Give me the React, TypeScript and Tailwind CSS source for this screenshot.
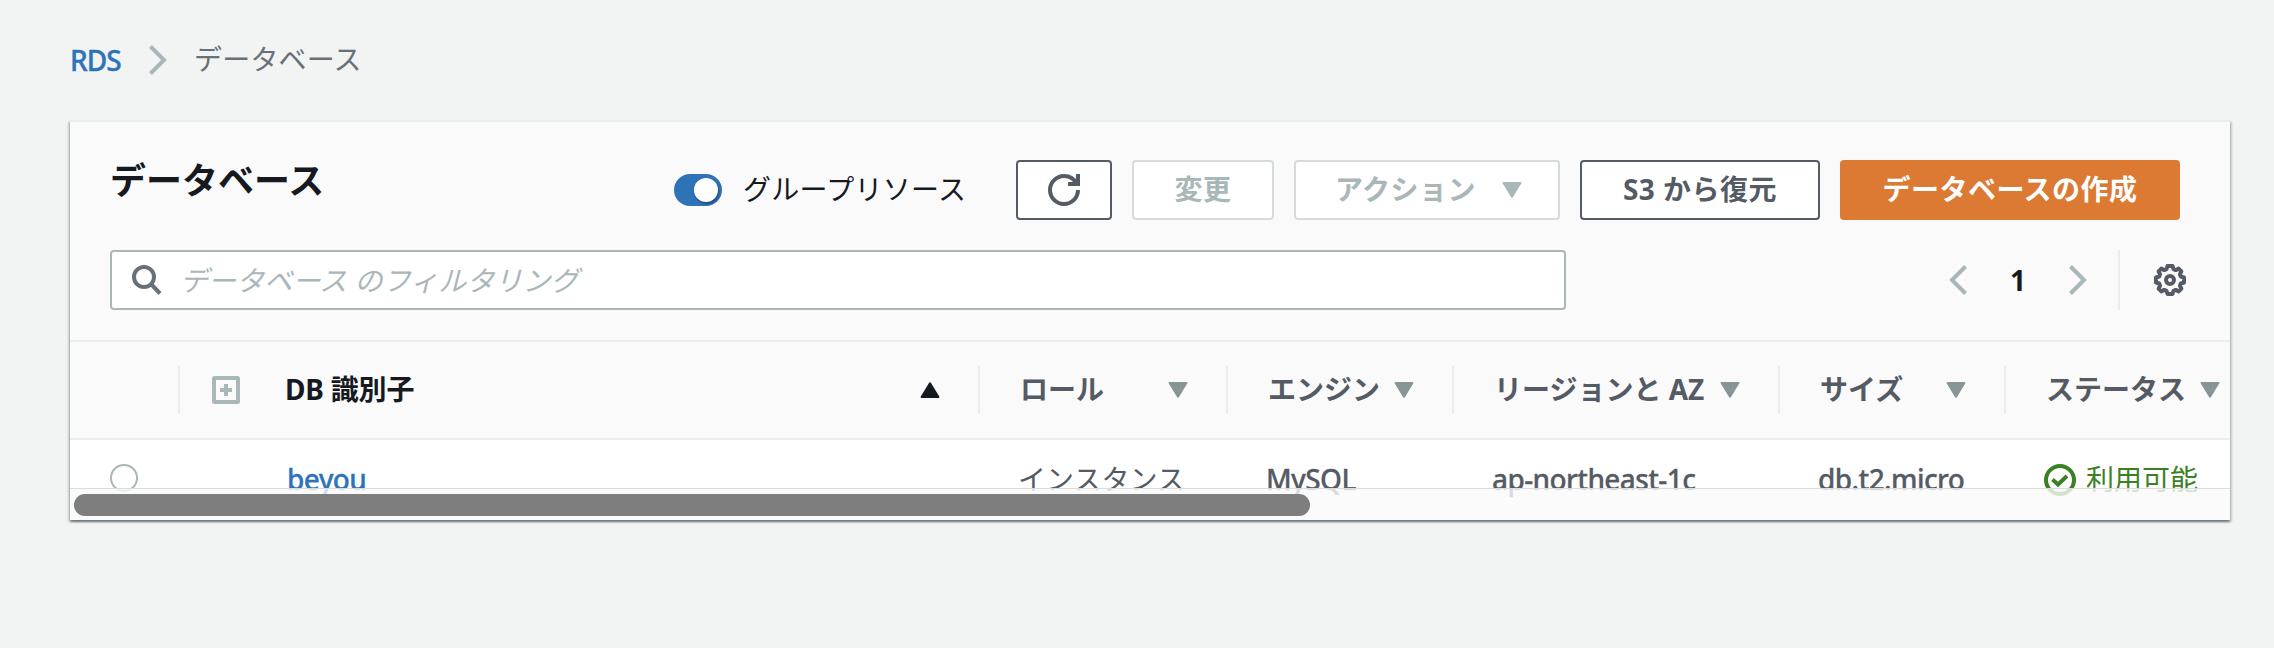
import React from 'react';

type Column = {
  label: string;
  width: string;
  value: React.ReactNode;
};

const Triangle: React.FC<{ up?: boolean; className?: string }> = ({ up, className = '' }) => (
  <svg viewBox="0 0 20 16" className={`h-4 w-5 shrink-0 ${className}`}>
    <path
      d={up ? 'M1.8 15h16.4L10 1.5z' : 'M1.8 1h16.4L10 14.5z'}
      fill="currentColor"
      stroke="currentColor"
      strokeWidth="2.4"
      strokeLinejoin="round"
    />
  </svg>
);

const Chevron: React.FC<{ left?: boolean }> = ({ left }) => (
  <svg viewBox="0 0 18 30" className="h-[30px] w-[18px] shrink-0 text-[#aab7b8]">
    <path d={left ? 'M16.5 1.5L3 15l13.5 13.5' : 'M1.5 1.5L15 15L1.5 28.5'} fill="none" stroke="currentColor" strokeWidth="4" />
  </svg>
);

const RefreshIcon = () => (
  <svg viewBox="0 0 16 16" className="size-8" fill="none" stroke="currentColor" strokeWidth="2">
    <path d="M15 8c0 3.87-3.13 7-7 7s-7-3.13-7-7 3.13-7 7-7c2.79 0 5.2 1.63 6.32 4" />
    <path d="M15 0v5h-5" />
  </svg>
);

const SearchIcon = () => (
  <svg viewBox="0 0 30 30" className="size-[30px] shrink-0 text-[#687078]" fill="none" stroke="currentColor" strokeWidth="4">
    <circle cx="12" cy="12" r="10" />
    <path d="M19 19l9 9.5" />
  </svg>
);

const GearIcon = () => (
  <svg viewBox="0 0 32 32" className="size-8 text-[#545b64]" fill="none" stroke="currentColor" strokeWidth="4" strokeLinejoin="round">
    <path d="M13.5 2h5l1 3.2 2.2.9 3-1.5 2.7 2.7-1.5 3 .9 2.2 3.2 1v5l-3.2 1-.9 2.2 1.5 3-2.7 2.7-3-1.5-2.2.9-1 3.2h-5l-1-3.2-2.2-.9-3 1.5-2.7-2.7 1.5-3-.9-2.2-3.2-1v-5l3.2-1 .9-2.2-1.5-3 2.7-2.7 3 1.5 2.2-.9z" />
    <circle cx="16" cy="16" r="4" />
  </svg>
);

const CheckIcon = () => (
  <svg viewBox="0 0 32 32" className="size-8 shrink-0" fill="none" stroke="currentColor" strokeWidth="4">
    <circle cx="16" cy="16" r="14" />
    <path d="M8.5 15.5l5.5 5L23 12" />
  </svg>
);

const PlusSquareIcon = () => (
  <svg viewBox="0 0 28 28" className="size-7 shrink-0 text-[#aab7b8]" fill="none" stroke="currentColor" strokeWidth="4">
    <rect x="2" y="2" width="24" height="24" rx="0.5" />
    <path d="M14 8v12M8 14h12" />
  </svg>
);

// Latin values run slightly tighter than the Japanese ones
const Latin: React.FC<{ children: React.ReactNode }> = ({ children }) => (
  <span className="font-medium tracking-[-0.6px] [-webkit-text-stroke:0.3px_currentColor]">{children}</span>
);

const columns: Column[] = [
  { label: 'ロール', width: 'w-[248px]', value: 'インスタンス' },
  { label: 'エンジン', width: 'w-[226px]', value: <Latin>MySQL</Latin> },
  { label: 'リージョンと AZ', width: 'w-[326px]', value: <Latin>ap-northeast-1c</Latin> },
  { label: 'サイズ', width: 'w-[226px]', value: <Latin>db.t2.micro</Latin> },
  {
    label: 'ステータス',
    width: 'w-[254px]',
    value: (
      <span className="flex items-center gap-2.5 text-[#3b8124]">
        <CheckIcon /> <span className="pb-0.5">利用可能</span>
      </span>
    ),
  },
];

const App: React.FC = () => {
  return (
    <div className="h-[648px] w-[2274px] overflow-hidden bg-[#f2f3f3] px-[70px] font-['Noto_Sans','Noto_Sans_CJK_JP',sans-serif] text-[28px] leading-[40px] text-[#16191f]">
      {/* Breadcrumb */}
      <nav className="flex h-[120px] items-start pt-10">
        <a className="w-[79px] font-medium tracking-[-1px] text-[#2e73b8] [-webkit-text-stroke:0.4px_currentColor]">RDS</a>
        <div className="flex h-10 w-[45px] items-center">
          <Chevron />
        </div>
        <span className="-mt-px tracking-[0.2px] text-[#687078]">データベース</span>
      </nav>

      <div className="relative h-[400px] w-[2160px] border-t-2 border-[#eaeded] bg-[#fafafa] shadow-[0_2px_2px_0_rgba(0,28,36,0.4),2px_2px_2px_0_rgba(0,28,36,0.15),-2px_2px_2px_0_rgba(0,28,36,0.15)]">
        {/* Title and actions */}
        <div className="flex h-[98px] items-end pr-[50px] pl-10">
          <h1 className="mb-[14px] w-[564px] text-[36px] leading-[50px] font-bold">データベース</h1>
          <div className="flex h-[60px] items-center">
            <div className="flex h-8 w-12 items-center justify-end rounded-full bg-[#2e73b8] pr-1">
              <div className="size-6 rounded-full bg-white shadow-[1px_2px_2px_rgba(0,0,0,0.35)]" />
            </div>
            <span className="-mt-0.5 ml-[21px] w-[273px] tracking-[0.3px]">グループリソース</span>
          </div>
          <div className="flex gap-5 font-bold tracking-[0.5px] whitespace-nowrap text-[#545b64]">
            <button className="flex h-[60px] w-24 items-center justify-center rounded border-2 border-[#545b64] bg-white">
              <RefreshIcon />
            </button>
            <button className="h-[60px] w-[142px] rounded border-2 border-[#d5dbdb] bg-white pb-0.5 text-[#aab7b8]">変更</button>
            <button className="flex h-[60px] w-[266px] items-center justify-between rounded border-2 border-[#d5dbdb] bg-white pr-9 pl-[39px] text-[#aab7b8]">
              <span className="pb-0.5">アクション</span> <Triangle />
            </button>
            <button className="h-[60px] w-[240px] rounded border-2 border-[#545b64] bg-white pb-0.5">S3 から復元</button>
            <button className="h-[60px] w-[340px] rounded bg-[#dc7a33] pb-0.5 text-white">データベースの作成</button>
          </div>
        </div>

        {/* Filter and paging */}
        <div className="flex h-[122px] items-start border-b-2 border-[#eaeded] pt-[30px] pl-10">
          <div className="flex h-[60px] w-[1456px] items-center gap-[18px] rounded border-2 border-[#aab7b8] bg-white pl-5">
            <SearchIcon />
            <span className="tracking-[0.1px] text-[#aab7b8] italic">データベース のフィルタリング</span>
          </div>
          <div className="ml-[383px] flex h-[60px] w-[171px] items-center border-r-2 border-[#eaeded]">
            <Chevron left />
            <span className="w-[102px] text-center font-bold">1</span>
            <Chevron />
          </div>
          <div className="ml-[34px] flex h-[60px] items-center">
            <GearIcon />
          </div>
        </div>

        {/* Table */}
        <div className="h-[178px] overflow-hidden">
          <div className="flex h-[98px] w-[2400px] items-center border-b-2 border-[#eaeded] font-bold">
            <div className="h-12 w-[110px] border-r-2 border-[#eaeded]" />
            <div className="flex h-12 w-[800px] items-center border-r-2 border-[#eaeded] pr-[38px] pl-8">
              <PlusSquareIcon />
              <span className="ml-[45px] grow pb-0.5 tracking-[-0.2px]">DB 識別子</span>
              <Triangle up />
            </div>
            {columns.map((col) => (
              <div key={col.label} className={`flex h-12 items-center justify-between border-r-2 border-[#eaeded] pr-[38px] pl-10 whitespace-nowrap text-[#545b64] ${col.width}`}>
                <span className="pb-0.5">{col.label}</span>
                <Triangle className="text-[#879596]" />
              </div>
            ))}
          </div>
          <div className="flex h-20 w-[2400px] items-center bg-white text-[#545b64]">
            <div className="w-[110px] pb-1 pl-10">
              <div className="size-7 rounded-full border-2 border-[#aab7b8] bg-white" />
            </div>
            <div className="w-[798px] pb-0.5 pl-[107px] text-[#2e73b8]">
              <Latin>beyou</Latin>
            </div>
            {columns.map((col) => (
              <div key={col.label} className={`pl-10 whitespace-nowrap ${typeof col.value === 'string' || col.label !== 'ステータス' ? 'pb-0.5' : ''} ${col.width}`}>
                {col.value}
              </div>
            ))}
          </div>
        </div>

        {/* Overlay scrollbar */}
        <div className="absolute inset-x-0 bottom-0 h-8 border-t border-[#dcdcdc] bg-[#fafafa]/80 pt-[5px] pl-1">
          <div className="h-[22px] w-[1236px] rounded-full bg-[#7e7e7e]" />
        </div>
      </div>
    </div>
  );
};

export default App;
